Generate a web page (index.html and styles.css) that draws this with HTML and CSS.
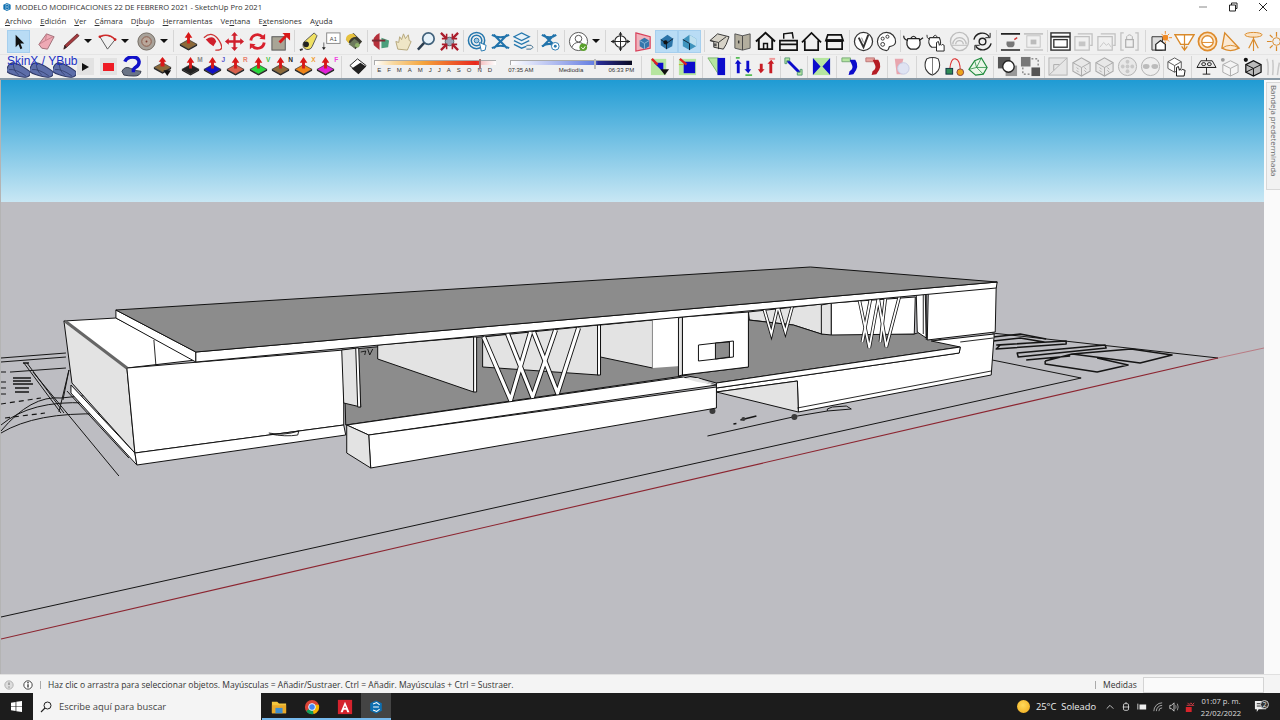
FILE: index.html
```html
<!DOCTYPE html>
<html lang="es">
<head>
<meta charset="utf-8">
<title>SketchUp Pro 2021</title>
<link rel="stylesheet" href="styles.css">
</head>
<body>
<svg class="defs" width="0" height="0" aria-hidden="true">
<defs>
<symbol id="select" viewBox="0 0 22 22"><path d="M8 4l0 13 3-3 2 5 2-1-2-5h4z" fill="#111"/></symbol>
<symbol id="eraser" viewBox="0 0 22 22"><path d="M3 14L11 3l8 3-7 13-6-1z" fill="#eea9b4" stroke="#9d6f78"/><path d="M11 3l-1 7-7 4M10 10l8-4" fill="none" stroke="#c6808c"/></symbol>
<symbol id="pencil" viewBox="0 0 22 22"><path d="M18 3l2 2L7 17l-3 2 1-4z" fill="#a53a3f" stroke="#5c2528" stroke-width=".8"/><path d="M5 15l2 2-3 2z" fill="#222"/></symbol>
<symbol id="arc" viewBox="0 0 22 22"><path d="M3 6l8 13L19 9Q12 2 3 6z" fill="none" stroke="#555"/><path d="M3 6Q12 2 19 9" fill="none" stroke="#d22c2c" stroke-width="1.600"/><circle cx="3" cy="6" r="1.400" fill="#c22"/><circle cx="19" cy="9" r="1.400" fill="#c22"/></symbol>
<symbol id="disc" viewBox="0 0 22 22"><circle cx="11" cy="11" r="9" fill="#a8a29a" stroke="#6e675e"/><circle cx="11" cy="11" r="5" fill="#b9a79a" stroke="#8c5c4c"/><circle cx="11" cy="11" r="1" fill="#7a3a30"/></symbol>
<symbol id="pp" viewBox="0 0 22 22"><path d="M2 14l9-5 9 5-9 5z" fill="currentColor" stroke="#333" stroke-width=".7"/><path d="M2 14v1.500l9 5 9-5V14l-9 5z" fill="#222"/><path d="M9.500 13V7H7l4-6 4 6h-2.500v6z" fill="#d81818"/></symbol>
<symbol id="follow" viewBox="0 0 22 22"><path d="M3 7Q12-1 19 10t-4 10" fill="none" stroke="#c33" stroke-width="1.300"/><path d="M5 9q8-6 11 2l-3 5-4-3z" fill="#cf1f2c"/></symbol>
<symbol id="move" viewBox="0 0 22 22"><path d="M11 1l3.500 4h-2.300v4.800H17V7.500l4 3.500-4 3.500v-2.300h-4.800V17h2.300L11 21l-3.500-4h2.300v-4.800H5v2.300L1 11l4-3.500v2.300h4.800V5H7.500z" fill="#cf1f2c"/></symbol>
<symbol id="rotate" viewBox="0 0 22 22"><path d="M4 10a7 7 0 0112-4" fill="none" stroke="#d8202c" stroke-width="3"/><path d="M18 12a7 7 0 01-12 4" fill="none" stroke="#d8202c" stroke-width="3"/><path d="M13 8l6 1 0-6zM9 14l-6-1 0 6z" fill="#d8202c"/></symbol>
<symbol id="scale" viewBox="0 0 22 22"><rect x="2" y="6" width="14" height="14" fill="#a9a596" stroke="#555"/><path d="M10 12l7-7" stroke="#d81818" stroke-width="3"/><path d="M13 2h8v8z" fill="#d81818"/></symbol>
<symbol id="tape" viewBox="0 0 22 22"><path d="M18 2l3 3-5 11a5 5 0 11-7-6z" fill="#efe063" stroke="#555"/><circle cx="9.500" cy="14" r="3" fill="#222"/><path d="M6 19L3 20" stroke="#333" stroke-width="2"/></symbol>
<symbol id="label" viewBox="0 0 22 22"><rect x="7" y="2" width="14" height="11" fill="#fff" stroke="#888"/><text x="14" y="10.500" class="t6" text-anchor="middle">A1</text><path d="M4 12v6" stroke="#666"/><path d="M2 17h4l-2 3z" fill="#222"/></symbol>
<symbol id="paint" viewBox="0 0 22 22"><path d="M3 9l8-7 9 9-7 8z" fill="#3a3a30"/><path d="M3 9q0-6 8-6l3 3q-7 0-8 7z" fill="#e6c13e"/><path d="M6 14l6-6 5 4-5 6z" fill="#6d7a5c"/><circle cx="15" cy="15" r="2.500" fill="#8fb26a"/></symbol>
<symbol id="orbit" viewBox="0 0 22 22"><path d="M10 2Q1 6 4 15l6 5z" fill="#b6303b"/><path d="M12 7l8 3-1 7-7 1z" fill="#4b9f7c"/><path d="M2 10h14" stroke="#7c2a33" stroke-width="2"/></symbol>
<symbol id="hand" viewBox="0 0 22 22"><path d="M5 19L3 11l3 1 1-6 2 3 2-6 2 5 3-4 1 6 2 1-4 9z" fill="#efe6c6" stroke="#b5a67a"/></symbol>
<symbol id="zoom" viewBox="0 0 22 22"><circle cx="13" cy="8" r="6" fill="#e6f2fa" stroke="#41627c" stroke-width="1.800"/><path d="M8.500 12.500L2 19.500" stroke="#2b3d4f" stroke-width="2.600"/></symbol>
<symbol id="zoomx" viewBox="0 0 22 22"><circle cx="11" cy="11" r="4.500" fill="#9ab" stroke="#566"/><path d="M2 2l6 6M20 2l-6 6M2 20l6-6M20 20l-6-6" stroke="#aa1c2b" stroke-width="2.400"/><path d="M8 3v5H3M14 3v5h5M8 19v-5H3M14 19v-5h5" fill="none" stroke="#aa1c2b" stroke-width="1.600"/></symbol>
<symbol id="rings" viewBox="0 0 22 22"><circle cx="10" cy="10" r="8.500" fill="none" stroke="#2577ad" stroke-width="1.600"/><circle cx="10" cy="10" r="5.500" fill="none" stroke="#2577ad" stroke-width="1.600"/><circle cx="10" cy="10" r="2.500" fill="#9cc6e1" stroke="#2577ad"/><path d="M13 12l7 3-1 5-4 1z" fill="#fff" stroke="#2577ad"/></symbol>
<symbol id="xmark" viewBox="0 0 22 22"><path d="M2 4q9 5 18 0M2 18q9-5 18 0M4 4l14 14M18 4L4 18" fill="none" stroke="#2173ab" stroke-width="2.200"/></symbol>
<symbol id="stack" viewBox="0 0 22 22"><path d="M1 6l8-4 8 4-8 4zM1 10l8 4 8-4M1 14l8 4 5-2" fill="#e8f2f8" stroke="#2577ad" stroke-width="1.400"/><path d="M14 15h5l2 2-2 2h-5" fill="none" stroke="#3a6a8a"/></symbol>
<symbol id="xgear" viewBox="0 0 22 22"><path d="M2 4q8 5 15 0M2 16q8-5 15 0M4 4l12 12M15 4L3 16" fill="none" stroke="#2173ab" stroke-width="2.200"/><circle cx="16" cy="16" r="4" fill="#fff" stroke="#2577ad"/><circle cx="16" cy="16" r="1.500" fill="#2577ad"/></symbol>
<symbol id="person" viewBox="0 0 22 22"><circle cx="11" cy="11" r="9.500" fill="#fff" stroke="#555"/><circle cx="11" cy="8" r="3.500" fill="none" stroke="#555"/><path d="M4 17q2-5 7-5t7 5" fill="none" stroke="#555"/><circle cx="16" cy="17" r="4" fill="#5aa02c"/><path d="M14 17l2 2 2-3" fill="none" stroke="#fff"/></symbol>
<symbol id="target" viewBox="0 0 22 22"><circle cx="11" cy="11" r="6" fill="#fff" stroke="#222" stroke-width="1.200"/><path d="M11 1v20M1 11h20" stroke="#222"/><path d="M11 1l-2 3h4zM11 21l-2-3h4zM1 11l3-2v4zM21 11l-3-2v4z" fill="#222"/></symbol>
<symbol id="cubered" viewBox="0 0 22 22"><path d="M3 2l15 4v12L3 21z" fill="#f0b4bd" stroke="#d8405a" stroke-width="1.200"/><path d="M7 10l5-3 5 3v6l-5 3-5-3z" fill="#3576ac"/><path d="M7 10l5 3 5-3M12 13v6" stroke="#8cb6d4" fill="none"/></symbol>
<symbol id="cubeb" viewBox="0 0 22 22"><path d="M5 9l7-5 6 4-1 8-6 3-6-4z" fill="#2c74a8"/><path d="M5 9l6 4 7-5M11 13v6" stroke="#123" fill="none"/><circle cx="10" cy="12" r="2.200" fill="#111"/></symbol>
<symbol id="cubeb2" viewBox="0 0 22 22"><path d="M4 9l7-5 7 4v8l-7 4-7-4z" fill="#3e93bd"/><path d="M11 4l7 4v8l-7-4z" fill="#bfe0ef"/><path d="M4 9l7 4v7" stroke="#123" fill="none"/></symbol>
<symbol id="house3" viewBox="0 0 22 22"><path d="M1 10l8-7 12 3-3 8-3 5-10-2v-6z" fill="#d7d3c8" stroke="#333"/><path d="M1 10l9 2 8-6M10 12v7" stroke="#333" fill="none"/><rect x="5" y="13" width="3" height="3" fill="#555"/></symbol>
<symbol id="book" viewBox="0 0 22 22"><path d="M3 3l8 2 8-2v15l-8 2-8-2z" fill="#b3ae9e" stroke="#555"/><path d="M11 5v15" stroke="#444"/><path d="M7 10v3" stroke="#333" stroke-width="1.500"/></symbol>
<symbol id="homeb" viewBox="0 0 22 22"><path d="M1 11L11 2l10 9M4 9v10h14V9" fill="none" stroke="#111" stroke-width="2"/><path d="M9 19v-6h4v6" fill="none" stroke="#111" stroke-width="1.600"/></symbol>
<symbol id="boxup" viewBox="0 0 22 22"><path d="M2 10h18v10H2zM2 14h18" fill="none" stroke="#111" stroke-width="1.800"/><path d="M6 8V3l9-1 1 6" fill="none" stroke="#111" stroke-width="1.500"/></symbol>
<symbol id="homeo" viewBox="0 0 22 22"><path d="M1 12L11 2l10 10M4 10v10h14V10" fill="none" stroke="#111" stroke-width="1.800"/></symbol>
<symbol id="box" viewBox="0 0 22 22"><path d="M4 4h14l2 6H2zM3 10h16v9H3z" fill="none" stroke="#111" stroke-width="1.800"/><path d="M2 10h18" stroke="#111" stroke-width="3"/></symbol>
<symbol id="vray" viewBox="0 0 22 22"><circle cx="11" cy="11" r="9.500" fill="#fff" stroke="#333" stroke-width="1.300"/><path d="M6 7l5 10 5-13" fill="none" stroke="#333" stroke-width="2"/><path d="M9 7l2 5" stroke="#888"/></symbol>
<symbol id="palette" viewBox="0 0 22 22"><path d="M11 1.500a9.500 9.500 0 100 19c3 0 2-3 3-4s6 0 6.500-5A9.500 9.500 0 0011 1.500z" fill="#fff" stroke="#333" stroke-width="1.200"/><circle cx="7" cy="8" r="1.600" fill="none" stroke="#333"/><circle cx="12" cy="6" r="1.600" fill="none" stroke="#333"/><circle cx="7" cy="14" r="2" fill="none" stroke="#333"/></symbol>
<symbol id="teapot" viewBox="0 0 22 22"><path d="M5 8h12q3 8-3 11H8Q2 16 5 8z" fill="#fff" stroke="#222" stroke-width="1.300"/><path d="M5 10Q0 8 1 5M17 10l4-3M8 8q3-5 6 0" fill="none" stroke="#222" stroke-width="1.300"/></symbol>
<symbol id="teahand" viewBox="0 0 22 22"><path d="M4 7h10q3 6-1 10H6Q1 13 4 7z" fill="#fff" stroke="#333" stroke-width="1.200"/><path d="M4 9Q0 7 1 4M7 7q3-5 5 0" fill="none" stroke="#333"/><path d="M11 21v-9l2-1 1 4 1-1 1 1 1-1 2 1v6z" fill="#fff" stroke="#222"/></symbol>
<symbol id="rainbow" viewBox="0 0 22 22"><circle cx="11" cy="11" r="9.500" fill="none" stroke="#bdbdbd" stroke-width="1.400"/><path d="M4 14a7 7 0 0114 0M7 14a4 4 0 018 0" fill="none" stroke="#bdbdbd" stroke-width="1.400"/><path d="M3 15h16" stroke="#bdbdbd"/></symbol>
<symbol id="spin" viewBox="0 0 22 22"><circle cx="11" cy="11" r="3.500" fill="none" stroke="#222" stroke-width="1.500"/><path d="M2 9a9 9 0 0116-3M20 13a9 9 0 01-16 3" fill="none" stroke="#222" stroke-width="1.500"/><path d="M19 2v5h-5M3 20v-5h5" fill="none" stroke="#222"/></symbol>
<symbol id="teabar" viewBox="0 0 22 22"><path d="M1 3h20M1 20h20" stroke="#222" stroke-width="1.600"/><path d="M7 11h8q1 5-2 6H9q-3-1-2-6z" fill="#777"/><path d="M15 9l3-2" stroke="#c33" stroke-width="1.500"/></symbol>
<symbol id="teaframe" viewBox="0 0 22 22"><path d="M1 3h20M1 20h20" stroke="#c4c4c4" stroke-width="1.600"/><rect x="4" y="5" width="14" height="12" fill="none" stroke="#c4c4c4"/><path d="M8 9h6v5H8z" fill="#bbb"/></symbol>
<symbol id="frame" viewBox="0 0 22 22"><rect x="1" y="2" width="20" height="18" fill="#fff" stroke="#333" stroke-width="1.500"/><path d="M1 6h20" stroke="#333" stroke-width="2"/><rect x="4" y="9" width="14" height="8" fill="none" stroke="#333" stroke-width="1.400"/></symbol>
<symbol id="framea" viewBox="0 0 22 22"><path d="M5 3h15v12h-2M2 6h15v14H2z" fill="none" stroke="#c0c0c0" stroke-width="1.300"/><path d="M6 11h7v5H6z" fill="#c6c6c6"/></symbol>
<symbol id="frameb" viewBox="0 0 22 22"><path d="M5 3h15v12h-2M2 6h15v14H2z" fill="none" stroke="#c0c0c0" stroke-width="1.300"/><path d="M4 17l4-5 3 3 2-2 3 4" fill="none" stroke="#c6c6c6"/></symbol>
<symbol id="lock" viewBox="0 0 22 22"><path d="M5 2H2v18h3M17 2h3v18h-3" fill="none" stroke="#c0c0c0" stroke-width="1.300"/><rect x="7" y="9" width="8" height="8" fill="none" stroke="#b0b0b0" stroke-width="1.300"/><path d="M8 9V6q3-4 6 0v3" fill="none" stroke="#b0b0b0"/></symbol>
<symbol id="sunhouse" viewBox="0 0 22 22"><path d="M1 6h11v14H1z" fill="#ddd" stroke="#333"/><path d="M5 14l5-4 5 4v6H5z" fill="#fff" stroke="#222" stroke-width="1.300"/><circle cx="15" cy="7" r="3" fill="#f08a24"/><path d="M15 0v3M15 11v2M22 7h-3M11 3l2 2M19 3l-2 2M19 11l-2-2" stroke="#f08a24"/></symbol>
<symbol id="ofunnel" viewBox="0 0 22 22"><path d="M1 4h20l-6 10h-8z" fill="#fff" stroke="#d98a2b" stroke-width="1.500"/><path d="M11 4v15M8 16l3 4 3-4" fill="none" stroke="#d98a2b" stroke-width="1.300"/></symbol>
<symbol id="oring" viewBox="0 0 22 22"><circle cx="11" cy="11" r="9.500" fill="#fbe3c4" stroke="#de8b2c" stroke-width="1.800"/><circle cx="11" cy="11" r="6" fill="#fff" stroke="#de8b2c" stroke-width="1.400"/><path d="M5 12h12" stroke="#de8b2c"/></symbol>
<symbol id="ocone" viewBox="0 0 22 22"><path d="M5 2L2 18q9 5 18 0z" fill="#fbe9d2" stroke="#d98a2b" stroke-width="1.400"/><path d="M2 18q9-6 18 0" fill="none" stroke="#d98a2b"/></symbol>
<symbol id="olamp" viewBox="0 0 22 22"><ellipse cx="11" cy="4" rx="9" ry="2.500" fill="#fbe3c4" stroke="#d98a2b"/><path d="M11 6v15M11 8L6 18M11 8l5 10" fill="none" stroke="#d98a2b" stroke-width="1.200"/></symbol>
<symbol id="oburst" viewBox="0 0 22 22"><circle cx="11" cy="11" r="4" fill="none" stroke="#d98a2b"/><path d="M11 1v5M11 16v5M1 11h5M16 11h5M4 4l3 3M18 4l-3 3M4 18l3-3M18 18l-3-3" stroke="#d98a2b" stroke-width="1.300"/></symbol>
<symbol id="mesh" viewBox="0 0 22 22"><path d="M0 12Q2 5 8 7t14 8q1 4-3 5T6 18 0 12z" fill="#5d6ea9" stroke="#2d3866"/><path d="M2 13q6-1 16 6M6 7q0 7 5 11" fill="none" stroke="#2d3866" stroke-width=".7"/></symbol>
<symbol id="help" viewBox="0 0 22 22"><path d="M1 16q3-6 9-3t11 3q-1 5-7 5T3 20z" fill="#6a7487" stroke="#333a4a"/><path d="M4 6q2-5 8-5t7 5q0 4-4 6l-2 2v3" fill="none" stroke="#1010c8" stroke-width="3.600"/></symbol>
<symbol id="ppb" viewBox="0 0 22 22"><path d="M2 12l9-5 9 5-9 5z" fill="#8c6a3a" stroke="#333" stroke-width=".7"/><path d="M2 12v1.500l9 5 9-5V12l-9 5z" fill="#222"/><path d="M9 11V6H7l4-5 4 5h-2v5z" fill="#d81818"/><path d="M12 15h8l-4 6z" fill="#111"/></symbol>
<symbol id="shadow" viewBox="0 0 22 22"><path d="M3 10l8-7 9 7-8 8z" fill="#fff" stroke="#222"/><path d="M5 13l9-6 6 4-8 8z" fill="#222"/></symbol>
<symbol id="gb1" viewBox="0 0 22 22"><path d="M2 3h16v17H2z" fill="#b6e6a0"/><path d="M5 7l10 10V7z" fill="#0c0ccc"/><path d="M3 3l6 6" stroke="#d22" stroke-width="2.400"/><path d="M12 14h9l-4.500 6z" fill="#111"/></symbol>
<symbol id="gb2" viewBox="0 0 22 22"><path d="M2 3h18v17H2z" fill="#b6e6a0"/><path d="M7 6h12v12H7z" fill="#0c0ccc"/><path d="M3 3l7 6" stroke="#d22" stroke-width="2.400"/><path d="M2 9l5 0" stroke="#ca2"/></symbol>
<symbol id="gb3" viewBox="0 0 22 22"><path d="M2 2h11v17z" fill="#b6e6a0" stroke="#7bb86c"/><rect x="12" y="2" width="8" height="18" fill="#0c0ccc"/></symbol>
<symbol id="ubl" viewBox="0 0 22 22"><path d="M5 4l-3 4h2v10h3V8h2zM16 18l3-4h-2V5h-3v9h-2z" fill="#0c0ccc"/><path d="M3 2h4M13 20h7" stroke="#5b5" stroke-width="2"/></symbol>
<symbol id="ure" viewBox="0 0 22 22"><path d="M5 18l-3-4h2V8h3v6h2zM16 4l3 4h-2v10h-3V8h-2z" fill="#c81c24"/><path d="M14 3h6" stroke="#e99" stroke-width="2"/></symbol>
<symbol id="diag" viewBox="0 0 22 22"><path d="M4 4l14 14" stroke="#0c0ccc" stroke-width="3"/><path d="M2 2h5v3H4v3H2zM20 20h-5v-3h3v-3h2z" fill="#b6e6a0" stroke="#597"/></symbol>
<symbol id="hour" viewBox="0 0 22 22"><path d="M2 2h18v18H2z" fill="#b6e6a0"/><path d="M2 2l8 9-8 9zM20 2l-8 9 8 9z" fill="#0c0ccc"/></symbol>
<symbol id="curveb" viewBox="0 0 22 22"><path d="M2 2h9v4H2z" fill="#b6e6a0" stroke="#7a7"/><path d="M10 4h6q5 7-2 15l-5 1 1-4q5-3 2-8z" fill="#0c0ccc"/></symbol>
<symbol id="curver" viewBox="0 0 22 22"><path d="M3 2h9v4H3z" fill="#e8a5a0" stroke="#b77"/><path d="M10 4h6q5 7-2 15l-5 1 1-4q5-3 2-8z" fill="#b51c24"/></symbol>
<symbol id="pinkf" viewBox="0 0 22 22"><path d="M5 3h9l-2 8 1 8H7z" fill="#e8a5ae"/><circle cx="14" cy="13" r="6" fill="#dfe3f2" stroke="#c5cbe3"/></symbol>
<symbol id="shield" viewBox="0 0 22 22"><path d="M5 3q6-3 12 0 3 7 0 12-3 4-6 5-4-1-7-6-2-6 1-11z" fill="#fff" stroke="#333" stroke-width="1.100"/><path d="M11 2v18" stroke="#777"/></symbol>
<symbol id="rcurve" viewBox="0 0 22 22"><path d="M5 14Q6 2 11 3t5 13" fill="none" stroke="#d33" stroke-width="1.100"/><rect x="1" y="13" width="7" height="6" fill="#2e8b57" stroke="#134"/><circle cx="16" cy="17" r="3.500" fill="#eca31c" stroke="#844"/></symbol>
<symbol id="gmesh" viewBox="0 0 22 22"><path d="M1 14l6-9 7-3 6 10-4 7-8 1z" fill="#eaf7e8" stroke="#1e8a3c" stroke-width="1.200"/><path d="M7 5l2 7-8 2M9 12l5-10M9 12l7 7M9 12l11 0" stroke="#1e8a3c" fill="none" stroke-width=".8"/></symbol>
<symbol id="sqc" viewBox="0 0 22 22"><rect x="1" y="1" width="13" height="12" fill="#555"/><rect x="9" y="10" width="12" height="11" fill="#999"/><circle cx="12" cy="11" r="6" fill="#fff" stroke="#222" stroke-width="1.400"/></symbol>
<symbol id="sqd" viewBox="0 0 22 22"><rect x="1" y="1" width="10" height="10" fill="#777"/><rect x="12" y="12" width="9" height="9" fill="#555"/><path d="M12 3h7v7M3 12v7h7" fill="none" stroke="#555" stroke-dasharray="2 2"/></symbol>
<symbol id="sqf" viewBox="0 0 22 22"><rect x="1" y="2" width="19" height="18" fill="#e6e6e6" stroke="#b4b4b4"/><path d="M1 20L20 2" stroke="#b4b4b4"/><path d="M6 9h6M6 9v6" stroke="#aaa"/></symbol>
<symbol id="dice" viewBox="0 0 22 22"><path d="M2 7l9-5 9 5v9l-9 5-9-5z" fill="#e8e8e8" stroke="#aaa" stroke-width="1.100"/><path d="M2 7l9 5 9-5M11 12v9" stroke="#aaa" fill="none"/><path d="M6 12l2 2M14 12l2 2M6 15l2 2M14 15l2 2" stroke="#aaa"/></symbol>
<symbol id="cdots" viewBox="0 0 22 22"><circle cx="11" cy="11" r="9.500" fill="#e8e8e8" stroke="#b2b2b2"/><circle cx="11" cy="6" r="2" fill="#c8c8c8"/><circle cx="6" cy="11" r="2" fill="#c8c8c8"/><circle cx="16" cy="11" r="2" fill="#c8c8c8"/><circle cx="11" cy="16" r="2" fill="#c8c8c8"/><circle cx="11" cy="11" r="2" fill="#c8c8c8"/></symbol>
<symbol id="c2" viewBox="0 0 22 22"><circle cx="11" cy="11" r="9.500" fill="#eee" stroke="#b2b2b2"/><ellipse cx="6.500" cy="11" rx="3.500" ry="2.500" fill="#bbb"/><ellipse cx="15.500" cy="11" rx="3.500" ry="2.500" fill="#bbb"/></symbol>
<symbol id="cubehand" viewBox="0 0 22 22"><path d="M2 6l7-4 7 4v7l-7 4-7-4z" fill="#fff" stroke="#555"/><path d="M2 6l7 4 7-4M9 10v7" fill="none" stroke="#555"/><path d="M11 21v-9l2-1 1 4 1-1 1 1 1-1 3 1-1 6z" fill="#fff" stroke="#111"/></symbol>
<symbol id="robot" viewBox="0 0 22 22"><path d="M1 12L5 5h12l4 7z" fill="#eee" stroke="#222"/><rect x="6" y="7" width="4" height="3" rx="1.500" fill="none" stroke="#222"/><rect x="12" y="7" width="4" height="3" rx="1.500" fill="none" stroke="#222"/><path d="M11 2v3M11 12v7M7 19h8M1 12h20" stroke="#222"/></symbol>
<symbol id="cubedot" viewBox="0 0 22 22"><path d="M4 9l8-4 8 4v8l-8 4-8-4z" fill="#f4f4f4" stroke="#aaa"/><path d="M4 9l8 4 8-4M12 13v8" fill="none" stroke="#aaa"/><circle cx="4" cy="4" r="2" fill="#9a9a9a"/></symbol>
<symbol id="cubedotb" viewBox="0 0 22 22"><path d="M4 9l8-4 8 4v8l-8 4-8-4z" fill="#bbb" stroke="#111" stroke-width="1.300"/><path d="M4 9l8 4 8-4M12 13v8M4 17L12 13" fill="none" stroke="#111"/><circle cx="4" cy="4" r="2.200" fill="#111"/></symbol>
<symbol id="grass" viewBox="0 0 22 22"><path d="M3 20Q4 8 2 3M8 20q1-10 0-16M13 20q1-8 2-13M18 20q0-5 2-9" fill="none" stroke="#c8c8c8" stroke-width="1.600"/></symbol>
<symbol id="skp" viewBox="0 0 22 22"><path d="M3 6l8-4 8 4v10l-8 4-8-4z" fill="#0d6fb1"/><path d="M7 7l5-2 4 3M7 11h8M7 15l5 2 4-3" fill="none" stroke="#fff" stroke-width="1.400"/></symbol>
</defs>
</svg>

<header class="titlebar">
  <svg class="appicon"><use href="#skp"/></svg>
  <span class="title">MODELO MODIFICACIONES 22 DE FEBRERO 2021 - SketchUp Pro 2021</span>
  <span class="winctl">
    <svg class="wc" viewBox="0 0 10 10"><path d="M1 5h8" stroke="#888"/></svg>
    <svg class="wc" viewBox="0 0 10 10"><path d="M1.500 3h6v6h-6zM3.500 3V1h5.500v5.500H7.500" fill="none" stroke="#222"/></svg>
    <svg class="wc" viewBox="0 0 10 10"><path d="M1 1l8 8M9 1l-8 8" stroke="#222"/></svg>
  </span>
</header>

<nav class="menubar">
  <span><u>A</u>rchivo</span><span><u>E</u>dición</span><span><u>V</u>er</span><span><u>C</u>ámara</span><span>D<u>i</u>bujo</span><span><u>H</u>erramientas</span><span>Ve<u>n</u>tana</span><span>E<u>x</u>tensiones</span><span>A<u>y</u>uda</span>
</nav>

<div class="toolbars">
  <div class="row row1">
    <span class="b on"><svg><use href="#select"/></svg></span><i class="g5"></i>
    <span class="b"><svg><use href="#eraser"/></svg></span><i class="g1"></i>
    <span class="b"><svg><use href="#pencil"/></svg></span><span class="d"></span><i class="g2"></i>
    <span class="b"><svg><use href="#arc"/></svg></span><span class="d"></span><i class="g4"></i>
    <span class="b"><svg><use href="#disc"/></svg></span><span class="d"></span>
    <i class="sep g7"></i>
    <span class="b"><svg><use href="#pp" class="c-brown"/></svg></span>
    <span class="b"><svg><use href="#follow"/></svg></span>
    <span class="b"><svg><use href="#move"/></svg></span>
    <span class="b"><svg><use href="#rotate"/></svg></span>
    <span class="b"><svg><use href="#scale"/></svg></span>
    <i class="sep g4"></i>
    <span class="b"><svg><use href="#tape"/></svg></span>
    <span class="b"><svg><use href="#label"/></svg></span>
    <span class="b"><svg><use href="#paint"/></svg></span>
    <i class="sep g4"></i>
    <span class="b"><svg><use href="#orbit"/></svg></span>
    <span class="b"><svg><use href="#hand"/></svg></span>
    <span class="b"><svg><use href="#zoom"/></svg></span>
    <span class="b"><svg><use href="#zoomx"/></svg></span>
    <i class="sep g5"></i>
    <span class="b"><svg><use href="#rings"/></svg></span>
    <span class="b"><svg><use href="#xmark"/></svg></span>
    <span class="b"><svg><use href="#stack"/></svg></span>
    <i class="sep g4"></i>
    <span class="b"><svg><use href="#xgear"/></svg></span>
    <i class="sep g5"></i>
    <span class="b"><svg><use href="#person"/></svg></span><span class="d"></span>
    <i class="sep g7"></i>
    <span class="b"><svg><use href="#target"/></svg></span>
    <span class="b"><svg><use href="#cubered"/></svg></span>
    <span class="b on"><svg><use href="#cubeb"/></svg></span>
    <span class="b on"><svg><use href="#cubeb2"/></svg></span>
    <i class="sep g7"></i>
    <span class="b"><svg><use href="#house3"/></svg></span>
    <span class="b"><svg><use href="#book"/></svg></span>
    <span class="b"><svg><use href="#homeb"/></svg></span>
    <span class="b"><svg><use href="#boxup"/></svg></span>
    <span class="b"><svg><use href="#homeo"/></svg></span>
    <span class="b"><svg><use href="#box"/></svg></span>
    <i class="sep g6"></i>
    <span class="b"><svg><use href="#vray"/></svg></span>
    <span class="b"><svg><use href="#palette"/></svg></span>
    <i class="sep g4"></i>
    <span class="b"><svg><use href="#teapot"/></svg></span>
    <span class="b"><svg><use href="#teahand"/></svg></span>
    <span class="b"><svg><use href="#rainbow"/></svg></span>
    <span class="b"><svg><use href="#spin"/></svg></span>
    <i class="sep g5"></i>
    <span class="b"><svg><use href="#teabar"/></svg></span>
    <span class="b"><svg><use href="#teaframe"/></svg></span>
    <i class="sep g4"></i>
    <span class="b"><svg><use href="#frame"/></svg></span>
    <span class="b"><svg><use href="#framea"/></svg></span>
    <span class="b"><svg><use href="#frameb"/></svg></span>
    <span class="b"><svg><use href="#lock"/></svg></span>
    <i class="sep g9"></i>
    <span class="b"><svg><use href="#sunhouse"/></svg></span>
    <span class="b"><svg><use href="#ofunnel"/></svg></span>
    <span class="b"><svg><use href="#oring"/></svg></span>
    <span class="b"><svg><use href="#ocone"/></svg></span>
    <span class="b"><svg><use href="#olamp"/></svg></span>
    <span class="b"><svg><use href="#oburst"/></svg></span>
  </div>

  <div class="row row2">
    <div class="skin">
      <span class="skinlabel">SkinX / YBub</span>
      <span class="b low"><svg><use href="#mesh"/></svg></span>
      <span class="b low"><svg><use href="#mesh"/></svg></span>
      <span class="b low"><svg><use href="#mesh"/></svg></span>
    </div>
    <span class="b play"><span class="playtri"></span></span><i class="g2"></i>
    <span class="b"><span class="stopsq"></span></span>
    <span class="b"><svg><use href="#help"/></svg></span>
    <i class="sep g8"></i>
    <span class="b"><svg><use href="#ppb"/></svg></span>
    <i class="sep g5"></i>
    <span class="b n"><svg><use href="#pp" class="c-black"/></svg><em class="sup c-grey">M</em></span>
    <span class="b n"><svg><use href="#pp" class="c-blue"/></svg><em class="sup c-indigo">J</em></span>
    <span class="b n"><svg><use href="#pp" class="c-red"/></svg><em class="sup c-salmon">R</em></span>
    <span class="b n"><svg><use href="#pp" class="c-green"/></svg><em class="sup c-lime">V</em></span>
    <span class="b n"><svg><use href="#pp" class="c-brown"/></svg><em class="sup c-dark">N</em></span>
    <span class="b n"><svg><use href="#pp" class="c-orange"/></svg><em class="sup c-amber">X</em></span>
    <span class="b n"><svg><use href="#pp" class="c-magenta"/></svg><em class="sup c-pink">F</em></span>
    <i class="sep g9"></i>
    <span class="b"><svg><use href="#shadow"/></svg></span>
    <i class="sep g5"></i>
    <div class="slider months">
      <div class="track tmonth"><span class="thumb thumb-m"></span></div>
      <div class="ticks"><span>E</span><span>F</span><span>M</span><span>A</span><span>M</span><span>J</span><span>J</span><span>A</span><span>S</span><span>O</span><span>N</span><span>D</span></div>
    </div>
    <i class="g12"></i>
    <div class="slider hours">
      <div class="track thour"><span class="thumb thumb-h"></span></div>
      <div class="ticks"><span>07:35 AM</span><span>Mediodía</span><span>06:33 PM</span></div>
    </div>
    <i class="sep g14"></i>
    <span class="b"><svg><use href="#gb1"/></svg></span>
    <i class="sep g5"></i>
    <span class="b"><svg><use href="#gb2"/></svg></span>
    <i class="sep g6"></i>
    <span class="b"><svg><use href="#gb3"/></svg></span>
    <i class="sep g4"></i>
    <span class="b"><svg><use href="#ubl"/></svg></span>
    <span class="b"><svg><use href="#ure"/></svg></span>
    <i class="sep g4"></i>
    <span class="b"><svg><use href="#diag"/></svg></span>
    <i class="sep g5"></i>
    <span class="b"><svg><use href="#hour"/></svg></span>
    <i class="sep g6"></i>
    <span class="b"><svg><use href="#curveb"/></svg></span>
    <span class="b"><svg><use href="#curver"/></svg></span>
    <i class="sep g4"></i>
    <span class="b"><svg><use href="#pinkf"/></svg></span>
    <i class="sep g9"></i>
    <span class="b"><svg><use href="#shield"/></svg></span>
    <span class="b"><svg><use href="#rcurve"/></svg></span>
    <span class="b"><svg><use href="#gmesh"/></svg></span>
    <i class="sep g6"></i>
    <span class="b"><svg><use href="#sqc"/></svg></span>
    <span class="b"><svg><use href="#sqd"/></svg></span>
    <i class="sep g5"></i>
    <span class="b"><svg><use href="#sqf"/></svg></span>
    <span class="b"><svg><use href="#dice"/></svg></span>
    <span class="b"><svg><use href="#dice"/></svg></span>
    <span class="b"><svg><use href="#cdots"/></svg></span>
    <span class="b"><svg><use href="#c2"/></svg></span>
    <i class="sep g3"></i>
    <span class="b"><svg><use href="#cubehand"/></svg></span>
    <i class="sep g7"></i>
    <span class="b"><svg><use href="#robot"/></svg></span>
    <span class="b"><svg><use href="#cubedot"/></svg></span>
    <span class="b"><svg><use href="#cubedotb"/></svg></span>
    <span class="b"><svg><use href="#grass"/></svg></span>
  </div>
</div>

<main class="workspace">
  <svg class="scene" viewBox="0 80 1264 594" preserveAspectRatio="none">
    <defs>
      <linearGradient id="sky" x1="0" y1="0" x2="0" y2="1">
        <stop offset="0" stop-color="#1f9bd4"/><stop offset="1" stop-color="#c8e7f4"/>
      </linearGradient>
    </defs>
    <rect x="0" y="80" width="1264" height="122" fill="url(#sky)"/>
    <rect x="0" y="202" width="1264" height="472" fill="#bdbdc2"/>

    <!-- ground linework -->
    <g class="ln">
      <path d="M0 617L1081 378L992 360"/>
      <path d="M992 333L1218 358"/>
      <path d="M707 436L797 416M797 416L827 411"/>
      <path class="thick" d="M740 420l16-4M733 424l3-.5"/>
      <path d="M827 411l24-2-5-3-14 1-5 2z"/>
      <path class="thick" d="M993 337L1020 334L1046 339M993 341L1020 338L1044 342L1000 345L996 349L1066 344L1066 341L996 345M1017 353L1105 345L1106 348L1018 357zM1026 360L1070 356M1045 361L1072 354L1131 349L1172 355L1140 363L1103 358L1072 354M1045 361L1045 364L1097 372L1128 365L1097 358"/>
      <path d="M0 358L65 353M0 362L65 357M10 372L65 368M0 433Q35 412 100 414M0 431Q30 395 60 398L90 395M0 425Q30 400 85 403M23 363L60 413M26 363L63 413M32 372L118 476M58 412L68 370M68 370L62 400M70 387L134 455M66 391L128 458"/>
      <path class="thick" d="M12 378h18M12 381h18M12 384h20M14 388h14M14 392h14M22 363h6"/>
      <path class="dash" d="M0 372h10M0 382h8M0 388h8M0 394h8M0 404l40-6M4 418l40-5"/>
    </g>
    <path d="M0 639L1218 358" fill="none" stroke="#8c2530" stroke-width="1.100"/>
    <path d="M1218 358L1264 348" fill="none" stroke="#b86a72" stroke-width=".8"/>
    <g class="spots">
      <circle cx="712" cy="411" r="3"/><circle cx="794" cy="417" r="3"/><circle cx="743" cy="419" r="2"/>
    </g>

    <!-- left wing -->
    <g class="solid">
      <path class="lit" d="M70 385L134 453L136 465L70 393z"/>
      <path class="soft" d="M63 321L126 368L134 453L71 383z"/>
      <path class="lit" d="M63 321L115 318L195 360L126 368z"/>
      <path class="lit" d="M126 368L343 350L343 425L134 453z"/>
      <path class="lit" d="M134 453L343 425L345 435L136 465z"/>
      <path class="wire" d="M153 340L155 365"/>
      <path class="edge" d="M64 321L126 368"/>
      <path class="wire" d="M268 433q15 3 30-2l-1 4q-12 2-28-1"/>
    </g>

    <!-- open floor and inner walls -->
    <g class="solid">
      <path class="top" d="M343 350L680 318L682 376L345 425z"/>
      <path class="soft" d="M341 350L357 348L360 407L343 403z"/>
      <path class="lit" d="M355 348L358 348L360 407L357 407z"/>
      <path class="soft" d="M377 345L473 337L473 392L377 359z"/>
      <path class="lit" d="M473 337L476 337L476 392L473 392z"/>
      <path class="soft" d="M482 337L598 325L598 375L482 367z"/>
      <path class="lit" d="M597 325L600 325L600 375L597 375z"/>
      <path class="soft" d="M600 325L652 320L652 368L600 357z"/>
      <path class="lit noedge" d="M652 320L680 317L680 366L652 368z"/>
      <path class="wire" d="M360 352l5-1-1 4M367 349l2 6 3-6"/>
    </g>

    <!-- X columns -->
    <path class="colb" d="M483 337L510 400L530 332M507 334L532 397L555 330M533 332L557 393L578 328"/>
    <path class="colw" d="M483 337L510 400L530 332M507 334L532 397L555 330M533 332L557 393L578 328"/>

    <!-- right wing back -->
    <g class="solid">
      <path class="soft" d="M748 312L831 303L821 334L793 325L749 320z"/>
      <path class="top" d="M682 375L748 367L748 320L793 325L821 334L914 334L920 332L960 347L716 383L698 378z"/>
      <path class="soft" d="M821 305L831 303L831 335L821 334z"/>
      <path class="lit" d="M831 303L915 297L914 334L831 335z"/>
      <path class="lit" d="M916 295L925 294L926 338L917 332z"/>
    </g>
    <path class="colb thin" d="M764 310L771 334L777 308M778 308L785 332L792 306M859 300L869 348L878 299M878 299L886 347L899 297M870 300L862 342M885 299L880 342"/>
    <path class="colw thin" d="M764 310L771 334L777 308M778 308L785 332L792 306M859 300L869 348L878 299M878 299L886 347L899 297M870 300L862 342M885 299L880 342"/>

    <!-- central room -->
    <g class="solid">
      <path class="soft" d="M678 318L682 317L682 375L678 376z"/>
      <path class="lit" d="M682 317L748 312L748 367L682 375z"/>
      <path class="lit" d="M698 345L733 341L733 357L698 361z"/>
      <path class="top" d="M715 343L729 342L729 357L715 359z"/>
    </g>

    <!-- right wing -->
    <g class="solid">
      <path class="lit" d="M928 293L996 286L995 332L927 340z"/>
      <path class="lit" d="M931 341L994 334L991 375L798 412L797 381L716 392L716 388L959 353L960 347z"/>
      <path class="lit" d="M716 383L960 347L959 353L716 388z"/>
      <path class="soft" d="M716 392L797 381L798 412z"/>
      <path class="wire" d="M993 338L960 342M797 408L991 371M926 295V340M923 295V334"/>
    </g>

    <!-- low front slab -->
    <g class="solid">
      <path class="lit" d="M346 425L683 377L716 385L368 435z"/>
      <path class="lit" d="M368 435L716 387L716 408L370 468z"/>
      <path class="soft" d="M346 425L368 435L370 468L346 453z"/>
      <path class="soft noedge" d="M683 378L697 378L715 385L697 382z"/>
    </g>

    <!-- roof -->
    <g class="solid">
      <path class="lit" d="M115 310L195 352L195 362L115 318z"/>
      <path class="lit" d="M195 352L997 282L996 288L195 362z"/>
      <path class="top" d="M115 310L810 267L997 282L195 352z"/>
    </g>
  </svg>
  <aside class="tray"><span class="traytab">Bandeja predeterminada</span></aside>
</main>

<footer class="statusbar">
  <svg class="st-icon" viewBox="0 0 12 12"><circle cx="6" cy="6" r="5" fill="#ddd" stroke="#aaa"/><path d="M6 3v3" stroke="#999" stroke-width="2"/><circle cx="6" cy="8.500" r="1" fill="#999"/></svg>
  <svg class="st-icon st-info" viewBox="0 0 12 12"><circle cx="6" cy="6" r="5" fill="#fff" stroke="#222"/><path d="M6 5v4" stroke="#222" stroke-width="1.500"/><circle cx="6" cy="3.300" r="1" fill="#222"/></svg>
  <i class="st-sep"></i>
  <span class="st-text">Haz clic o arrastra para seleccionar objetos. Mayúsculas = Añadir/Sustraer. Ctrl = Añadir. Mayúsculas + Ctrl = Sustraer.</span>
  <i class="st-sep st-push"></i>
  <span class="st-label">Medidas</span>
  <span class="st-field"></span>
</footer>

<footer class="taskbar">
  <span class="start"><svg viewBox="0 0 12 12"><path d="M0 1.800L5 1v4.600H0zM5.800.9L12 0v5.600H5.800zM0 6.400h5V11l-5-.8zM5.800 6.400H12V12l-6.200-.9z" fill="#fff"/></svg></span>
  <span class="search">
    <svg viewBox="0 0 12 12"><circle cx="7.500" cy="4.500" r="3.500" fill="none" stroke="#222"/><path d="M5 7L1 11" stroke="#222" stroke-width="1.100"/></svg>
    <span>Escribe aquí para buscar</span>
  </span>
  <span class="apps">
    <span class="app run"><svg viewBox="0 0 18 18"><path d="M1 3h6l2 2h8v11H1z" fill="#f3c53d"/><path d="M1 7h16v9H1z" fill="#e9a92a"/><rect x="5" y="10" width="8" height="6" fill="#3f8fd0"/></svg></span>
    <span class="app run"><svg viewBox="0 0 18 18"><circle cx="9" cy="9" r="8" fill="#db4437"/><path d="M9 9L2.500 13.500A8 8 0 0011 16.800z" fill="#0f9d58"/><path d="M9 9l2 7.800A8 8 0 0016.600 6.500H9z" fill="#f4b400"/><circle cx="9" cy="9" r="3.800" fill="#4285f4" stroke="#fff"/></svg></span>
    <span class="app run"><svg viewBox="0 0 18 18"><rect x="1" y="1" width="16" height="16" fill="#d5232d"/><path d="M4 15L9 3l5 12h-2.500L10.500 12h-3l-1 3zM8 10h2L9 7.500z" fill="#fff"/></svg></span>
    <span class="app run active"><svg viewBox="0 0 22 22"><use href="#skp"/></svg></span>
  </span>
  <span class="tray-right">
    <span class="sun"></span>
    <span class="weather">25°C&nbsp; Soleado</span>
    <svg class="ti" viewBox="0 0 12 12"><path d="M2 8l4-4 4 4" fill="none" stroke="#ddd"/></svg>
    <svg class="ti" viewBox="0 0 12 12"><rect x="3" y="2" width="6" height="8" rx="1.500" fill="none" stroke="#ddd"/><path d="M6 0v2M2 6h8" stroke="#ddd"/></svg>
    <svg class="ti" viewBox="0 0 12 12"><rect x="3" y="3" width="8" height="6" fill="#eee"/><path d="M1 2v7" stroke="#eee"/></svg>
    <svg class="ti" viewBox="0 0 12 12"><path d="M1 11a10 10 0 0110-10M4 11a7 7 0 017-7M7 11a4 4 0 014-4" fill="none" stroke="#bbb"/></svg>
    <svg class="ti" viewBox="0 0 12 12"><path d="M1 4h2l3-3v10L3 8H1z" fill="none" stroke="#ddd"/><path d="M8 4q1 2 0 4M10 2q2 4 0 8" fill="none" stroke="#aaa"/></svg>
    <svg class="ti" viewBox="0 0 12 12"><rect x="1" y="6" width="7" height="6" fill="#d8232a"/><path d="M3 1l2 2 2-2 2 2 2-2M2 4h9" stroke="#e9414a" fill="none"/></svg>
    <span class="clock"><span>01:07 p. m.</span><span>22/02/2022</span></span>
    <span class="notif"><svg viewBox="0 0 14 14"><path d="M1 1h12v9H5l-2 3v-3H1z" fill="#eee"/><path d="M3 4h8M3 6.500h8" stroke="#222"/></svg><b>2</b></span>
  </span>
</footer>
</body>
</html>
```

FILE: styles.css
```css
* { box-sizing: border-box; }
html, body { margin: 0; padding: 0; height: 100%; }
body {
  width: 1280px;
  height: 720px;
  overflow: hidden;
  display: flex;
  flex-direction: column;
  background: #fff;
  font-family: "Open Sans", "Noto Sans", sans-serif;
  color: #222;
}
.defs { position: absolute; }
i { display: block; font-style: normal; flex: none; }

.titlebar {
  height: 14px;
  flex: none;
  display: flex;
  align-items: center;
  padding-left: 2px;
  font-size: 7.600px;
  color: #333;
}
.appicon { width: 10px; height: 10px; margin-right: 3px; }
.title { white-space: nowrap; }
.winctl { margin-left: auto; display: flex; gap: 20px; padding-right: 12px; }
.wc { width: 10px; height: 10px; }

.menubar {
  height: 14px;
  flex: none;
  display: flex;
  align-items: center;
  gap: 8.100px;
  padding-left: 5px;
  font-size: 7.750px;
  color: #333;
}

.toolbars { flex: none; height: 50px; background: #f0f0f0; overflow: hidden; }
.row { display: flex; align-items: center; padding-left: 7px; white-space: nowrap; }
.row1 { height: 26px; }
.row2 { height: 24px; border-top: 1px solid #e4e4e4; }
.b {
  width: 23px;
  height: 23px;
  flex: none;
  display: flex;
  align-items: center;
  justify-content: center;
  position: relative;
}
.b svg { width: 21px; height: 21px; }
.b.n { width: 22.600px; }
.b.on { background: #b9dcf5; box-shadow: inset 0 0 0 1px #a6cfee; }
.d { width: 12px; height: 23px; flex: none; display: flex; align-items: center; justify-content: center; }
.d::before {
  content: "";
  border-left: 4px solid transparent;
  border-right: 4px solid transparent;
  border-top: 4px solid #111;
}
.g1 { width: 1px; } .g2 { width: 2px; } .g3 { width: 3px; } .g4 { width: 4px; }
.g5 { width: 5px; } .g6 { width: 6px; } .g7 { width: 7px; } .g8 { width: 8px; }
.g9 { width: 9px; } .g12 { width: 12px; } .g14 { width: 14px; }
.sep { height: 22px; display: flex; justify-content: center; }
.sep::before { content: ""; width: 1px; background: #d6d6d6; }

.skin { display: flex; position: relative; height: 24px; align-items: flex-end; }
.skinlabel {
  position: absolute;
  left: 0;
  top: 0;
  font: 400 12px/12px "Liberation Sans", Arial, sans-serif;
  color: #1c30c4;
  z-index: 1;
  white-space: nowrap;
}
.b.low { height: 22px; }
.b.low svg { width: 23px; height: 23px; flex: none; }
.b.play { width: 19px; }
.playtri {
  width: 17px;
  height: 17px;
  background: #e2e2e2;
  display: flex;
  align-items: center;
  justify-content: center;
}
.playtri::before {
  content: "";
  border-top: 4px solid transparent;
  border-bottom: 4px solid transparent;
  border-left: 7px solid #111;
}
.stopsq {
  width: 17px;
  height: 17px;
  background: #e2e2e2;
  display: flex;
  align-items: center;
  justify-content: center;
}
.stopsq::before { content: ""; width: 11px; height: 8px; background: #ee1c25; }

.c-brown { color: #8c6a3a; }
.c-black { color: #222; }
.c-blue { color: #1111c4; }
.c-red { color: #d8604c; }
.c-green { color: #28d83c; }
.c-orange { color: #ee8418; }
.c-magenta { color: #e020d8; }
.sup {
  position: absolute;
  top: 1px;
  right: -1px;
  font: 700 6.500px/7px "Liberation Sans", Arial, sans-serif;
  font-style: normal;
}
.c-grey { color: #888; } .c-indigo { color: #5555cc; } .c-salmon { color: #e8806c; }
.c-lime { color: #40c040; } .c-dark { color: #222; } .c-amber { color: #f0a030; } .c-pink { color: #f040e0; }
.t6 { font: 6px "Liberation Sans", Arial, sans-serif; fill: #444; }

.slider { flex: none; display: flex; flex-direction: column; gap: 2px; }
.months { width: 122px; }
.hours { width: 126px; }
.track { height: 5px; position: relative; border: 1px solid #aaa; border-width: 1px 0 0 1px; }
.tmonth { background: linear-gradient(90deg, #fff 0, #f8d9a0 15%, #f4a43c 40%, #e8281c 83%, #e63a30 87%, #f6c6c6 88%, #fff 100%); }
.thour { background: linear-gradient(90deg, #fff 0, #a8b4ee 40%, #6680e2 68%, #5f78dc 69%, #2a2e98 72%, #0a0a20 100%); margin: 0 2px; }
.thumb { position: absolute; top: -2px; width: 2px; height: 10px; background: #9c9c9c; }
.thumb-m { left: 104px; background: #a87878; }
.thumb-h { left: 83px; background: #bbb; }
.ticks {
  display: flex;
  justify-content: space-between;
  font: 6px/7px "Liberation Sans", Arial, sans-serif;
  color: #333;
}
.months .ticks { padding: 0 4px 0 3px; }

.workspace { flex: 1; display: flex; min-height: 0; border-top: 2px solid #8a9aa6; background: #fafafa; }
.scene { width: 1264px; height: 594px; flex: none; display: block; border-left: 1px solid #b4b4b4; }
.tray { flex: 1; padding: 2px 0 0 2px; }
.traytab {
  display: block;
  height: 108px;
  border: 1px solid #d8d8d8;
  border-right: 0;
  background: #f2f2f2;
  writing-mode: vertical-rl;
  font-size: 7.850px;
  line-height: 13px;
  color: #666;
  white-space: nowrap;
  padding-top: 2px;
}

.ln path { fill: none; stroke: #151515; stroke-width: 1; }
.ln .thick { stroke-width: 1.500; stroke-linejoin: round; }
.ln .dash { stroke-dasharray: 5 4; stroke-width: 1.200; }
.spots circle { fill: #3a3a3a; }
.solid path { stroke: #111; stroke-width: 1; stroke-linejoin: round; }
.solid .lit { fill: #fff; }
.solid .soft { fill: #e3e3e3; }
.solid .top { fill: #8c8c8c; }
.solid .wire { fill: none; stroke-width: .9; }
.solid .edge { fill: none; stroke: #666; stroke-width: 3; }
.solid .noedge { stroke: none; }
.colb { fill: none; stroke: #111; stroke-width: 5; stroke-linejoin: miter; }
.colw { fill: none; stroke: #fff; stroke-width: 3.200; stroke-linejoin: miter; }
.colb.thin { stroke-width: 3.400; }
.colw.thin { stroke-width: 1.800; }

.statusbar {
  height: 19px;
  flex: none;
  display: flex;
  align-items: center;
  background: #f4f4f4;
  border-top: 1px solid #e0e0e0;
  padding: 1px 0 0 4px;
  font-size: 8.520px;
  color: #333;
}
.st-icon { width: 10px; height: 10px; flex: none; }
.st-info { margin-left: 9px; }
.st-sep { width: 1px; height: 8px; background: #aaa; margin: 0 7px; }
.st-text { white-space: nowrap; }
.st-push { margin-left: auto; }
.st-label { width: 40px; }
.st-field {
  width: 121px;
  height: 16px;
  margin-right: 16px;
  background: #fafafa;
  border: 1px solid #d4d4d4;
}

.taskbar {
  height: 27px;
  flex: none;
  display: flex;
  align-items: stretch;
  background: #1c1c1c;
  color: #ececec;
}
.start { width: 33px; display: flex; align-items: center; justify-content: center; }
.start svg { width: 11px; height: 11px; }
.search {
  width: 228px;
  background: #f4f4f4;
  display: flex;
  align-items: center;
  gap: 7px;
  padding-left: 7px;
  font-size: 9.400px;
  color: #444;
}
.search svg { width: 12px; height: 12px; }
.apps { display: flex; margin-left: 1px; }
.app { width: 33px; display: flex; align-items: center; justify-content: center; }
.app svg { width: 16px; height: 16px; }
.app.run { box-shadow: inset 0 -2px 0 #76b9ed; }
.app.active { background: #444; width: 30px; }
.tray-right { margin-left: auto; display: flex; align-items: center; }
.sun {
  width: 13px;
  height: 13px;
  border-radius: 50%;
  background: radial-gradient(circle at 45% 40%, #ffd95a, #f0a818);
  margin-right: 6px;
}
.weather { font-size: 9.300px; white-space: nowrap; margin-right: 9px; }
.ti { width: 10px; height: 10px; margin-right: 6px; flex: none; }
.clock {
  display: flex;
  flex-direction: column;
  align-items: center;
  font-size: 7.600px;
  line-height: 12px;
  width: 40px;
  white-space: nowrap;
  color: #ddd;
}
.notif { position: relative; width: 39px; display: flex; align-items: center; justify-content: center; }
.notif svg { width: 13px; height: 13px; }
.notif b {
  position: absolute;
  right: 11px;
  bottom: 4px;
  width: 9px;
  height: 9px;
  border-radius: 50%;
  background: #333;
  border: 1px solid #ccc;
  font: 400 6.500px/7px "Open Sans", sans-serif;
  text-align: center;
}
```
